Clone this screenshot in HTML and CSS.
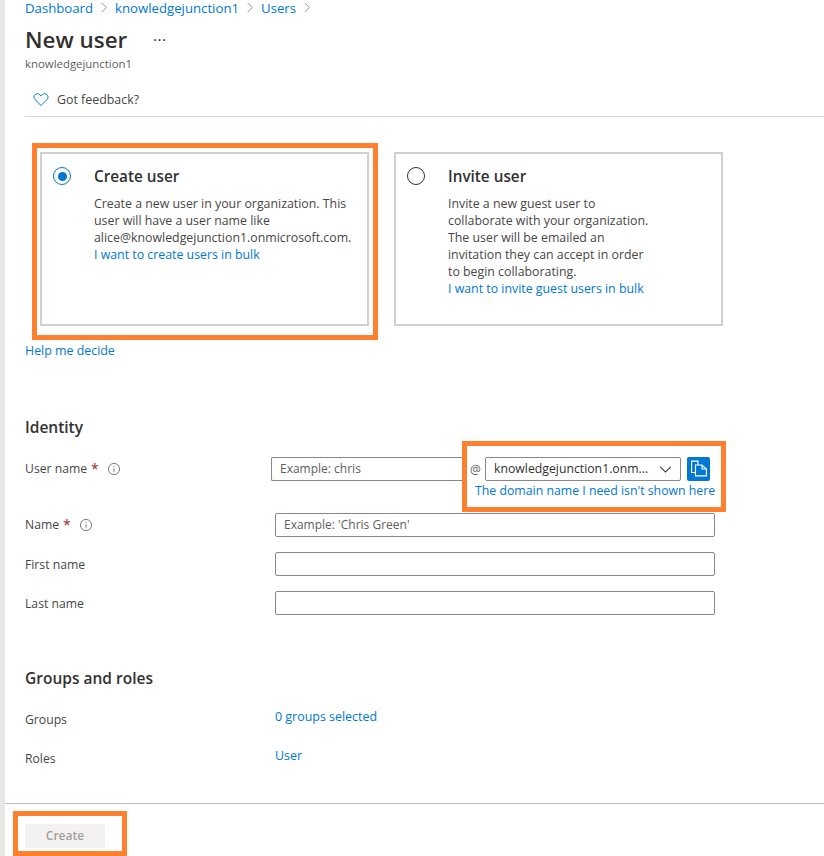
FILE: index.html
```html
<!DOCTYPE html>
<html lang="en">
<head>
<meta charset="utf-8">
<title>New user</title>
<link rel="stylesheet" href="styles.css">
</head>
<body>
<div class="page">
  <main class="main">
    <nav class="crumbs">
      <a>Dashboard</a>
      <svg class="chev" viewBox="0 0 8 12"><path d="M1.5 1l5 5-5 5" /></svg>
      <a>knowledgejunction1</a>
      <svg class="chev" viewBox="0 0 8 12"><path d="M1.5 1l5 5-5 5" /></svg>
      <a>Users</a>
      <svg class="chev" viewBox="0 0 8 12"><path d="M1.5 1l5 5-5 5" /></svg>
    </nav>
    <div class="title-row"><h1>New user</h1><span class="more">···</span></div>
    <div class="subtitle">knowledgejunction1</div>
    <div class="feedback">
      <svg class="heart" viewBox="0 0 18 16"><path d="M9 14.8 2.4 8.2C.7 6.5.7 4 2.2 2.5c1.5-1.4 3.900-1.400 5.400.1L9 4l1.400-1.400c1.500-1.500 3.900-1.500 5.400-.1 1.500 1.500 1.500 4-.2 5.700z"/></svg>
      <span>Got feedback?</span>
    </div>
    <div class="cards">
      <section class="card">
        <span class="radio checked"></span>
        <div class="card-body">
          <h3>Create user</h3>
          <p>Create a new user in your organization. This user will have a user name like alice@knowledgejunction1.onmicrosoft.com.<br><a>I want to create users in bulk</a></p>
        </div>
      </section>
      <section class="card">
        <span class="radio"></span>
        <div class="card-body narrow">
          <h3>Invite user</h3>
          <p>Invite a new guest user to collaborate with your organization. The user will be emailed an invitation they can accept in order to begin collaborating.<br><a>I want to invite guest users in bulk</a></p>
        </div>
      </section>
    </div>
    <a class="help">Help me decide</a>

    <h2 class="identity">Identity</h2>
    <div class="row row-user">
      <label class="label">User name <b>*</b><svg class="info" viewBox="0 0 14 14"><circle cx="7" cy="7" r="5.600"/><path d="M7 6.200v3.600M7 4v1"/></svg></label>
      <div class="user-fields">
        <div class="user-line">
          <div class="input user-input">Example: chris</div>
          <span class="at">@</span>
          <div class="input select"><span>knowledgejunction1.onm...</span><svg viewBox="0 0 14 8"><path d="M1 1l6 6 6-6"/></svg></div>
          <button class="copy" aria-label="Copy"><svg viewBox="0 0 16 16"><path d="M4.500 12H.6V.6h6.400v3.900"/><path d="M4.500 4.500h6.500l4.400 4v6.900H4.500z"/><path d="M11 4.500v4h4.400"/></svg></button>
        </div>
        <a class="domain">The domain name I need isn't shown here</a>
      </div>
    </div>
    <div class="row row-name">
      <label class="label">Name <b>*</b><svg class="info" viewBox="0 0 14 14"><circle cx="7" cy="7" r="5.600"/><path d="M7 6.200v3.600M7 4v1"/></svg></label>
      <div class="input wide">Example: 'Chris Green'</div>
    </div>
    <div class="row row-first">
      <label class="label">First name</label>
      <div class="input wide"></div>
    </div>
    <div class="row row-last">
      <label class="label">Last name</label>
      <div class="input wide"></div>
    </div>

    <h2 class="groups-title">Groups and roles</h2>
    <div class="row-link row-groups"><span class="label">Groups</span><a>0 groups selected</a></div>
    <div class="row-link row-roles"><span class="label">Roles</span><a>User</a></div>

    <footer class="footer"><button class="create">Create</button></footer>
  </main>
</div>
<div class="mark mark-card"></div>
<div class="mark mark-domain"></div>
<div class="mark mark-create"></div>
</body>
</html>
```
FILE: styles.css
```css
* { box-sizing: border-box; }
html, body { margin: 0; padding: 0; }
body {
  width: 824px;
  height: 856px;
  overflow: hidden;
  position: relative;
  background: #fff;
  color: #323130;
  font-family: "Open Sans", "Noto Sans", sans-serif;
  font-size: 12px;
}
a { color: #0078d4; text-decoration: none; }
.page { padding-left: 5px; background: #e9e7e5; height: 856px; }
.main { background: #fff; height: 856px; padding-left: 20px; }

.crumbs { display: flex; align-items: center; gap: 7px; height: 14px; font-size: 13.200px; line-height: 14px; padding-top: 1px; }
.chev { width: 8px; height: 11px; fill: none; stroke: #8a8886; stroke-width: 1; }
.title-row { display: flex; align-items: center; height: 34px; margin-top: 9px; }
h1 { margin: 0; font-size: 22.400px; line-height: 34px; font-weight: 600; color: #323130; }
.more { margin-left: 26px; font-size: 13px; letter-spacing: 1px; line-height: 34px; font-weight: 600; }
.subtitle { font-size: 11.400px; line-height: 14px; color: #605e5c; }
.feedback { display: flex; align-items: center; height: 17px; margin-top: 20px; margin-left: 8px; gap: 8px; color: #484644; font-size: 12.400px; }
.heart { width: 16px; height: 15px; fill: none; stroke: #0078d4; stroke-width: 1.100; }

.cards { display: flex; gap: 25px; padding-top: 35px; border-top: 1px solid #d6d4d2; margin-top: 8px; padding-left: 15px; }
.card { width: 329px; height: 174px; border: 2px solid #d2d0ce; display: flex; padding: 13px 0 0 11px; }
.radio { width: 18px; height: 18px; border-radius: 50%; border: 1px solid #323130; flex: none; position: relative; }
.radio.checked { border-color: #0078d4; }
.radio.checked::after { content: ""; position: absolute; left: 3.500px; top: 3.500px; width: 9px; height: 9px; border-radius: 50%; background: #0078d4; }
.card-body { margin-left: 23px; width: 268px; }
.card-body.narrow { width: 205px; }
h3 { margin: 0; font-size: 15.300px; line-height: 18px; font-weight: 600; color: #323130; }
.card p { margin: 10px 0 0; font-size: 12.350px; line-height: 17px; color: #484644; }
.help { display: block; font-size: 12.400px; line-height: 16px; margin-top: 17px; }

h2 { margin: 0; font-size: 15.500px; line-height: 18px; font-weight: 600; color: #323130; }
.identity { margin-top: 59px; }
.row { display: flex; align-items: center; }
.label { color: #484644; font-size: 12.200px; line-height: 16px; display: flex; align-items: center; }
.label b { color: #a4262c; font-weight: 400; margin-left: 4px; font-size: 14px; }
.info { width: 14px; height: 14px; margin-left: 8px; fill: none; stroke: #605e5c; stroke-width: 0.800; }
.input { height: 24px; border: 1px solid #8a8886; border-radius: 2px; font-size: 12px; line-height: 22px; padding-left: 8px; color: #605e5c; background: #fff; }
.row-user { margin-top: 21px; align-items: flex-start; }
.row-user .label { width: 246px; height: 24px; }
.user-fields { display: flex; flex-direction: column; }
.user-line { display: flex; align-items: center; }
.user-input { width: 195px; border-right: 0; border-radius: 2px 0 0 2px; }
.at { width: 19px; padding-left: 4px; font-size: 12px; color: #605e5c; }
.select { width: 196px; display: flex; align-items: center; justify-content: space-between; padding-right: 8px; color: #323130; white-space: nowrap; font-size: 12.250px; }
.select svg { width: 13px; height: 7px; fill: none; stroke: #323130; stroke-width: 1.200; }
.copy { width: 23px; height: 24px; margin-left: 6px; padding: 3px 0 0 4px; background: #0078d4; border: 0; border-radius: 2px; display: flex; }
.copy svg { width: 16px; height: 17px; fill: none; stroke: #fff; stroke-width: 1.100; }
.domain { font-size: 12.300px; line-height: 16px; margin-top: 2px; margin-left: 204px; white-space: nowrap; }
.row-name { margin-top: 14px; }
.row-name .label { width: 250px; }
.row-first, .row-last { margin-top: 15px; }
.row-first .label, .row-last .label { width: 250px; padding-top: 2px; }
.wide { width: 440px; }

.groups-title { margin-top: 54px; }
.row-link { display: flex; }
.row-link .label { width: 250px; }
.row-link a { font-size: 12.450px; line-height: 16px; position: relative; bottom: 3px; }
.row-groups { margin-top: 25px; }
.row-roles { margin-top: 23px; }

.footer { margin-left: -20px; margin-top: 36px; border-top: 1px solid #bdbbb9; padding: 20px 0 0 20px; }
.create { display: block; width: 80px; height: 24px; padding: 0 0 2px; border: 0; border-radius: 2px; background: #f3f2f1; color: #a19f9d; font-family: inherit; font-size: 12px; font-weight: 600; }

.mark { position: absolute; border: 5px solid #fe7f2d; pointer-events: none; }
.mark-card { left: 32px; top: 143px; width: 346px; height: 197px; }
.mark-domain { left: 462px; top: 441px; width: 264px; height: 71px; }
.mark-create { left: 13px; top: 811px; width: 114px; height: 45px; }
```
